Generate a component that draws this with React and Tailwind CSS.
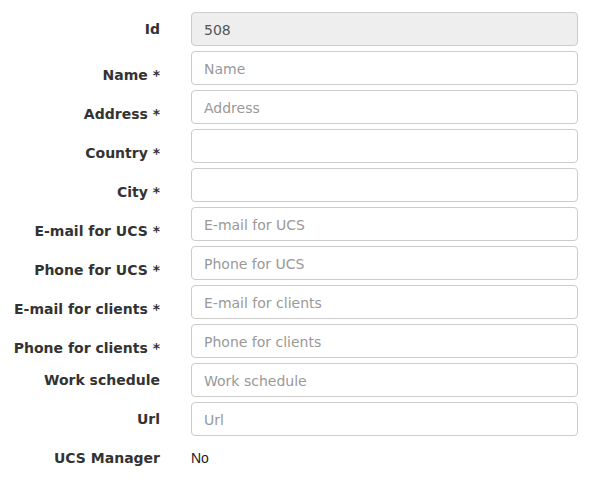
import React from "react";

const rows = [
  { label: "Id", value: "508", disabled: true },
  { label: "Name *", placeholder: "Name", req: true },
  { label: "Address *", placeholder: "Address", req: true },
  { label: "Country *", placeholder: "", req: true },
  { label: "City *", placeholder: "", req: true },
  { label: "E-mail for UCS *", placeholder: "E-mail for UCS", req: true },
  { label: "Phone for UCS *", placeholder: "Phone for UCS", req: true },
  { label: "E-mail for clients *", placeholder: "E-mail for clients", req: true },
  { label: "Phone for clients *", placeholder: "Phone for clients", req: true },
  { label: "Work schedule", placeholder: "Work schedule" },
  { label: "Url", placeholder: "Url" },
];

export default function App() {
  return (
    <div className="w-[590px] h-[480px] bg-white pt-[12px] font-['DejaVu_Sans',sans-serif] text-[14px] text-[#333]">
      {rows.map((r) => (
        <div key={r.label} className="flex items-start mb-[5px]">
          <label
            className={`w-[160px] shrink-0 text-right font-bold leading-[20px] ${
              r.req ? "pt-[14px]" : "pt-[7px]"
            }`}
          >
            {r.label}
          </label>
          <input
            readOnly
            disabled={r.disabled}
            defaultValue={r.value}
            placeholder={r.placeholder}
            className={`ml-[31px] w-[387px] h-[34px] pl-[12px] pr-[12px] pt-[2px] pb-0 border border-[#ccc] rounded-[4px] text-[14px] text-[#555] placeholder:text-[#999] outline-none font-['DejaVu_Sans',sans-serif] ${
              r.disabled ? "bg-[#eee]" : "bg-white"
            }`}
          />
        </div>
      ))}
      <div className="flex items-start">
        <label className="w-[160px] shrink-0 text-right font-bold leading-[20px] pt-[7px]">
          UCS Manager
        </label>
        <div className="ml-[31px] pt-[7px] leading-[20px] font-['Liberation_Sans',sans-serif] text-[#222]">
          No
        </div>
      </div>
    </div>
  );
}
